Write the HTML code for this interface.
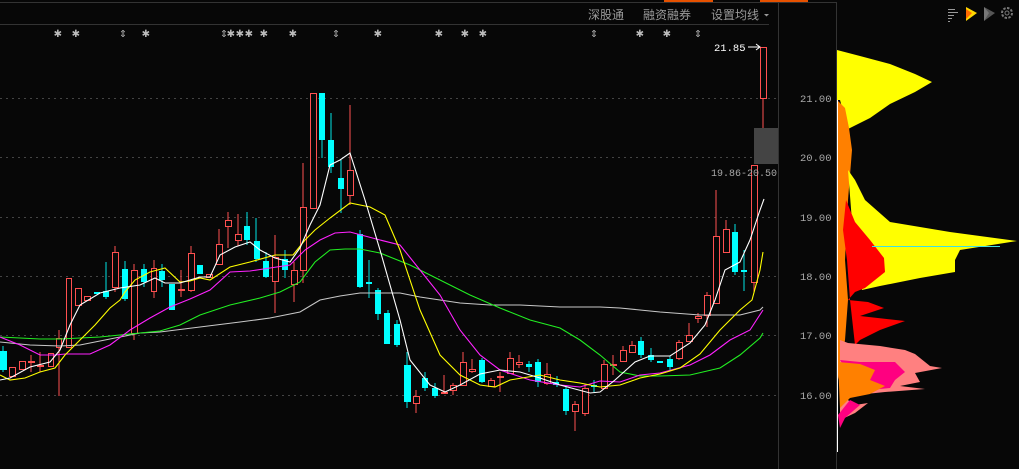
<!DOCTYPE html>
<html><head><meta charset="utf-8"><style>
html,body{margin:0;padding:0;background:#070707;width:1019px;height:469px;overflow:hidden}
svg{display:block}
text{font-family:"Liberation Mono",monospace}
.cn{font-family:"Liberation Sans","Noto Sans CJK SC",sans-serif;font-size:12px;fill:#9a9a9a}
.ax{font-size:10.5px;fill:#a8a8a8}
.st{font-size:13px;fill:#bbb;font-family:"DejaVu Sans",sans-serif}
</style></head><body>
<svg width="1019" height="469" viewBox="0 0 1019 469">
<rect width="1019" height="469" fill="#070707"/>
<line x1="0" y1="2.5" x2="837" y2="2.5" stroke="#333"/>
<line x1="664" y1="1" x2="713" y2="1" stroke="#e65100" stroke-width="2"/>
<line x1="760" y1="1" x2="808" y2="1" stroke="#e65100" stroke-width="2"/>
<line x1="0" y1="24.5" x2="769" y2="24.5" stroke="#333"/>
<line x1="778.5" y1="2" x2="778.5" y2="469" stroke="#333"/>
<line x1="836.5" y1="2" x2="836.5" y2="469" stroke="#333"/>
<text x="588" y="19" class="cn">深股通</text>
<text x="643" y="19" class="cn">融资融券</text>
<text x="711" y="19" class="cn">设置均线</text>
<path d="M764 14 l5 0 l-2.5 2.5z" fill="#9a9a9a"/>
<g stroke="#999" stroke-width="1">
<line x1="948" y1="9.5" x2="955" y2="9.5"/><line x1="948" y1="12.5" x2="958" y2="12.5"/><line x1="948" y1="15.5" x2="954" y2="15.5"/><line x1="948" y1="18.5" x2="952" y2="18.5"/><line x1="948" y1="21.5" x2="950" y2="21.5"/>
</g>
<path d="M966 7 L977 13 L966 21z" fill="#ffd700"/><path d="M966 9 L972 13 L966 19z" fill="#ff6a00"/>
<path d="M984 7 L995 13 L984 21z" fill="#555"/><path d="M984 7 L989 13 L984 21z" fill="#777"/>
<circle cx="1007" cy="13" r="5" fill="none" stroke="#777" stroke-width="2" stroke-dasharray="2.5 1.4"/><circle cx="1007" cy="13" r="2" fill="none" stroke="#777"/>
<g stroke="#444" stroke-dasharray="2 4">
<line x1="0" y1="98.5" x2="778" y2="98.5"/><line x1="0" y1="157.5" x2="778" y2="157.5"/><line x1="0" y1="217.5" x2="778" y2="217.5"/><line x1="0" y1="276.5" x2="778" y2="276.5"/><line x1="0" y1="335.5" x2="778" y2="335.5"/><line x1="0" y1="395.5" x2="778" y2="395.5"/>
</g>
<g class="ax">
<text x="800" y="102">21.00</text><text x="800" y="161">20.00</text><text x="800" y="221">19.00</text><text x="800" y="280">18.00</text><text x="800" y="339">17.00</text><text x="800" y="399">16.00</text>
</g>
<g class="st">
<text x="54" y="37">✱</text><text x="72" y="37">✱</text><text x="119" y="37">⇕</text><text x="142" y="37">✱</text>
<text x="220" y="37">⇕</text><text x="227" y="37">✱</text><text x="236" y="37">✱</text><text x="245" y="37">✱</text><text x="260" y="37">✱</text><text x="289" y="37">✱</text><text x="332" y="37">⇕</text><text x="374" y="37">✱</text><text x="435" y="37">✱</text><text x="461" y="37">✱</text><text x="479" y="37">✱</text><text x="590" y="37">⇕</text><text x="636" y="37">✱</text><text x="663" y="37">✱</text><text x="694" y="37">⇕</text>
</g>
<g stroke="#ff5050" stroke-width="1">
<line x1="59" y1="330" x2="59" y2="396"/><line x1="31" y1="355" x2="31" y2="372"/><line x1="40" y1="352" x2="40" y2="372"/>
<line x1="115" y1="246" x2="115" y2="292"/><line x1="134" y1="264" x2="134" y2="340"/><line x1="154" y1="260" x2="154" y2="298"/><line x1="181" y1="270" x2="181" y2="297"/><line x1="191" y1="246" x2="191" y2="292"/>
<line x1="219" y1="229" x2="219" y2="264"/><line x1="228" y1="212" x2="228" y2="248"/><line x1="238" y1="214" x2="238" y2="246"/><line x1="275" y1="235" x2="275" y2="313"/><line x1="294" y1="262" x2="294" y2="302"/>
<line x1="303" y1="163" x2="303" y2="283"/><line x1="350" y1="105" x2="350" y2="205"/>
<line x1="416" y1="390" x2="416" y2="413"/><line x1="444" y1="375" x2="444" y2="394"/><line x1="453" y1="383" x2="453" y2="395"/><line x1="463" y1="352" x2="463" y2="386"/><line x1="472" y1="359" x2="472" y2="373"/><line x1="491" y1="378" x2="491" y2="387"/><line x1="500" y1="372" x2="500" y2="392"/><line x1="510" y1="352" x2="510" y2="374"/><line x1="519" y1="355" x2="519" y2="368"/><line x1="547" y1="363" x2="547" y2="385"/><line x1="575" y1="401" x2="575" y2="431"/><line x1="585" y1="384" x2="585" y2="416"/><line x1="604" y1="360" x2="604" y2="389"/><line x1="613" y1="355" x2="613" y2="375"/><line x1="623" y1="346" x2="623" y2="362"/><line x1="632" y1="341" x2="632" y2="352"/><line x1="679" y1="340" x2="679" y2="360"/><line x1="689" y1="323" x2="689" y2="342"/><line x1="698" y1="313" x2="698" y2="323"/><line x1="707" y1="292" x2="707" y2="327"/><line x1="716" y1="190" x2="716" y2="303"/><line x1="726" y1="220" x2="726" y2="252"/><line x1="754" y1="165" x2="754" y2="292"/><line x1="763" y1="47" x2="763" y2="128"/>
</g>
<g stroke="#00e5e5">
<line x1="3" y1="346" x2="3" y2="372"/><line x1="106" y1="262" x2="106" y2="299"/><line x1="125" y1="261" x2="125" y2="301"/><line x1="144" y1="264" x2="144" y2="287"/><line x1="162" y1="264" x2="162" y2="287"/><line x1="247" y1="212" x2="247" y2="245"/><line x1="256" y1="218" x2="256" y2="262"/><line x1="266" y1="252" x2="266" y2="278"/><line x1="285" y1="250" x2="285" y2="278"/><line x1="322" y1="93" x2="322" y2="158"/><line x1="331" y1="113" x2="331" y2="173"/><line x1="341" y1="160" x2="341" y2="213"/><line x1="360" y1="230" x2="360" y2="288"/><line x1="369" y1="260" x2="369" y2="298"/><line x1="378" y1="288" x2="378" y2="320"/><line x1="388" y1="310" x2="388" y2="344"/><line x1="397" y1="320" x2="397" y2="347"/><line x1="407" y1="352" x2="407" y2="408"/><line x1="425" y1="372" x2="425" y2="391"/><line x1="435" y1="383" x2="435" y2="398"/><line x1="482" y1="358" x2="482" y2="383"/><line x1="529" y1="361" x2="529" y2="372"/><line x1="538" y1="359" x2="538" y2="387"/><line x1="557" y1="376" x2="557" y2="387"/><line x1="566" y1="385" x2="566" y2="415"/><line x1="594" y1="380" x2="594" y2="392"/><line x1="641" y1="337" x2="641" y2="358"/><line x1="651" y1="348" x2="651" y2="362"/><line x1="670" y1="356" x2="670" y2="370"/><line x1="735" y1="224" x2="735" y2="275"/><line x1="744" y1="250" x2="744" y2="291"/>
</g>
<g fill="#070707" stroke="#ff5050">
<rect x="9.5" y="367.5" width="6" height="9"/><rect x="19.5" y="361.5" width="6" height="8"/><rect x="28.5" y="361.5" width="6" height="1"/><rect x="37.5" y="365.5" width="6" height="1"/><rect x="48.5" y="353.5" width="5" height="13"/><rect x="56.5" y="338.5" width="5" height="9"/><rect x="66.5" y="278.5" width="5" height="69"/><rect x="75.5" y="288.5" width="6" height="17"/><rect x="84.5" y="296.5" width="6" height="4"/>
<rect x="112.5" y="252.5" width="6" height="35"/><rect x="131.5" y="270.5" width="6" height="63"/><rect x="151.5" y="268.5" width="5" height="23"/><rect x="178.5" y="289.5" width="6" height="1"/><rect x="188.5" y="253.5" width="6" height="37"/><rect x="206.5" y="274.5" width="6" height="3"/><rect x="216.5" y="244.5" width="6" height="20"/><rect x="225.5" y="220.5" width="6" height="6"/><rect x="235.5" y="234.5" width="6" height="6"/>
<rect x="272.5" y="257.5" width="6" height="24"/><rect x="291.5" y="270.5" width="6" height="14"/><rect x="300.5" y="207.5" width="6" height="63"/><rect x="310.5" y="93.5" width="6" height="115"/><rect x="347.5" y="170.5" width="6" height="25"/>
<rect x="413.5" y="396.5" width="6" height="7"/><rect x="441.5" y="392.5" width="6" height="1"/><rect x="450.5" y="385.5" width="6" height="5"/><rect x="460.5" y="362.5" width="6" height="23"/><rect x="469.5" y="369.5" width="6" height="2"/><rect x="488.5" y="380.5" width="6" height="6"/><rect x="497.5" y="376.5" width="6" height="1"/><rect x="507.5" y="358.5" width="6" height="15"/><rect x="516.5" y="362.5" width="6" height="2"/><rect x="544.5" y="374.5" width="6" height="9"/><rect x="572.5" y="404.5" width="6" height="7"/><rect x="582.5" y="388.5" width="6" height="25"/><rect x="601.5" y="364.5" width="6" height="24"/><rect x="610.5" y="364.5" width="6" height="1"/><rect x="620.5" y="350.5" width="6" height="11"/><rect x="629.5" y="345.5" width="6" height="7"/>
<rect x="676.5" y="342.5" width="6" height="16"/><rect x="686.5" y="335.5" width="6" height="6"/><rect x="695.5" y="316.5" width="6" height="2"/><rect x="704.5" y="295.5" width="6" height="20"/><rect x="713.5" y="236.5" width="6" height="67"/><rect x="723.5" y="229.5" width="6" height="23"/><rect x="751.5" y="165.5" width="6" height="117"/><rect x="760.5" y="47.5" width="6" height="51"/>
</g>
<g fill="#00ffff">
<rect x="0" y="351" width="7" height="19"/><rect x="94" y="292" width="6" height="2"/><rect x="103" y="291" width="6" height="6"/><rect x="122" y="269" width="6" height="30"/><rect x="141" y="269" width="6" height="13"/><rect x="159" y="271" width="6" height="9"/><rect x="169" y="284" width="6" height="26"/><rect x="197" y="265" width="6" height="9"/>
<rect x="244" y="226" width="6" height="14"/><rect x="254" y="241" width="6" height="18"/><rect x="263" y="261" width="6" height="16"/><rect x="282" y="259" width="6" height="11"/><rect x="319" y="93" width="6" height="47"/><rect x="328" y="140" width="6" height="27"/><rect x="338" y="178" width="6" height="11"/><rect x="357" y="234" width="6" height="53"/><rect x="366" y="282" width="6" height="2"/><rect x="375" y="290" width="6" height="24"/><rect x="384" y="313" width="6" height="31"/><rect x="394" y="324" width="6" height="21"/>
<rect x="404" y="365" width="7" height="37"/><rect x="422" y="378" width="6" height="10"/><rect x="432" y="388" width="6" height="8"/><rect x="479" y="360" width="6" height="22"/><rect x="526" y="364" width="6" height="3"/><rect x="535" y="362" width="6" height="20"/><rect x="553" y="382" width="6" height="3"/><rect x="563" y="389" width="6" height="22"/><rect x="591" y="385" width="6" height="2"/><rect x="638" y="341" width="6" height="14"/><rect x="648" y="355" width="6" height="5"/><rect x="657" y="361" width="6" height="2"/><rect x="667" y="359" width="6" height="8"/><rect x="732" y="232" width="6" height="40"/><rect x="741" y="270" width="6" height="2"/>
</g>
<g fill="none" stroke-width="1.1">
<polyline stroke="#c8c8c8" points="0,342 30,345 60,346 80,345 100,341 120,337 140,333 160,332 200,327 240,322 270,318 300,312 320,300 340,296 360,293 400,293 420,297 460,303 490,305 520,305 560,307 600,307 620,308 660,312 700,315 740,315 760,310 763,307"/>
<polyline stroke="#22ee22" points="0,337 20,338 40,339 60,339 80,338 100,337 120,335 140,333 160,331 180,325 200,315 230,305 260,298 280,292 300,282 315,262 330,250 345,249 360,249 380,253 410,265 440,280 470,295 500,308 530,320 560,328 580,340 600,355 620,372 640,376 660,376 690,375 720,368 740,355 760,338 763,333"/>
<polyline stroke="#ff22ff" points="0,337 20,345 40,355 55,355 65,354 90,354 110,345 130,330 150,318 170,307 190,299 210,290 230,272 250,271 270,268 290,265 305,250 320,240 335,233 350,232 380,240 400,245 420,270 440,295 460,330 480,355 500,370 530,380 560,385 580,387 600,381 620,382 640,375 660,373 690,365 710,355 730,340 750,330 763,310"/>
<polyline stroke="#ffff00" points="0,375 10,380 25,378 40,372 55,368 65,355 80,340 95,325 110,308 120,300 125,292 135,280 150,272 165,268 180,282 190,281 200,278 210,280 230,267 250,262 275,255 293,255 305,240 315,230 330,218 350,203 370,207 385,215 400,250 420,310 440,355 460,375 480,385 495,387 510,380 540,375 560,380 580,383 600,387 620,385 640,378 660,374 680,368 700,354 720,330 740,310 752,300 760,270 763,252"/>
<polyline stroke="#ffffff" points="0,380 10,378 30,367 50,362 60,350 70,325 80,305 100,293 120,288 140,285 155,278 165,283 180,283 200,277 210,277 220,255 235,247 250,242 260,250 275,258 290,262 300,248 310,225 320,205 330,165 340,160 350,153 365,200 380,250 400,320 410,360 430,385 445,392 460,385 480,374 500,370 520,372 540,378 560,385 575,389 590,393 600,392 615,380 635,362 650,356 670,356 690,343 705,325 715,300 725,270 740,262 750,240 760,210 764,199"/>
</g>
<rect x="754" y="128" width="24" height="36" fill="#444"/>
<text x="711" y="176" style="font-size:10px;fill:#a8a8a8">19.86-20.50</text>
<text x="714" y="51" style="font-size:10.5px;fill:#fff">21.85</text>
<path d="M748 47 H760 M756 44 L760 47 L756 50" stroke="#fff" fill="none"/>
<polygon fill="#ffff00" points="837,50 860,56 890,64 915,74 932,82 915,92 890,104 870,118 848,129 840,100 837,100"/>
<polygon fill="#ff8000" points="837,100 845,108 849,128 852,150 848,200 845,260 848,300 845,340 838,380 838,100"/>
<polygon fill="#ffff00" points="848,170 855,180 865,200 890,222 950,232 1017,241 960,250 955,260 955,272 920,278 880,286 862,290 855,260"/>
<polygon fill="#ff0000" points="846,200 855,222 870,240 884,258 885,272 865,288 855,292 848,300 868,302 884,308 860,316 905,321 880,330 860,340 855,345 850,300 847,260 843,230"/>
<line x1="872" y1="246.5" x2="1000" y2="246.5" stroke="#40e0e0"/>
<polygon fill="#ff8080" points="840,340 848,343 880,346 905,350 915,354 930,366 942,368 915,373 920,382 900,386 925,389 885,392 866,394 845,398 855,405 868,403 855,413 840,420"/>
<polygon fill="#ff0080" points="840,360 860,362 895,362 905,372 895,380 890,388 870,390 855,380 848,372"/>
<polygon fill="#ff0080" points="838,415 850,400 860,405 845,418 840,428"/>
<polygon fill="#ff8000" points="838,362 860,364 875,370 870,380 885,386 870,394 850,398 840,408"/>
<line x1="837.5" y1="100" x2="837.5" y2="452" stroke="#fff"/>
</svg>
</body></html>
